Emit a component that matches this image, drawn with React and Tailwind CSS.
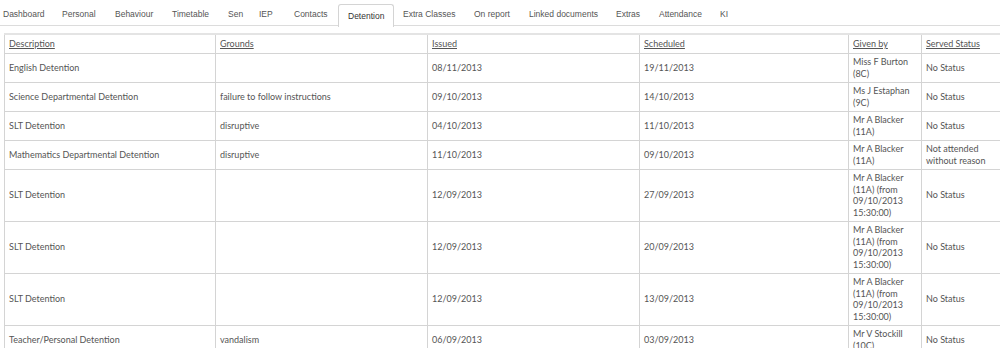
const TABS = [
  { label: "Dashboard", w: "w-[53px] pl-[3px]" },
  { label: "Personal", w: "w-[53px] pl-[9px]" },
  { label: "Behaviour", w: "w-[57px] pl-[9px]" },
  { label: "Timetable", w: "w-[56px] pl-[9px]" },
  { label: "Sen", w: "w-[31px] pl-[9px]" },
  { label: "IEP", w: "w-[35px] pl-[9px]" },
  { label: "Contacts", w: "w-[53px] pl-[9px]" },
  { label: "Detention", w: "w-[56px] pl-[9px]", active: true },
  { label: "Extra Classes", w: "w-[71px] pl-[9px]" },
  { label: "On report", w: "w-[55px] pl-[9px]" },
  { label: "Linked documents", w: "w-[87px] pl-[9px]" },
  { label: "Extras", w: "w-[43px] pl-[9px]" },
  { label: "Attendance", w: "w-[61px] pl-[9px]" },
  { label: "KI", w: "w-[40px] pl-[9px]" },
];

const BLACKER_FROM = ["Mr A Blacker", "(11A) (from", "09/10/2013", "15:30:00)"];

const ROWS = [
  { desc: "English Detention", grounds: "", issued: "08/11/2013", sched: "19/11/2013", by: ["Miss F Burton", "(8C)"], status: ["No Status"] },
  { desc: "Science Departmental Detention", grounds: "failure to follow instructions", issued: "09/10/2013", sched: "14/10/2013", by: ["Ms J Estaphan", "(9C)"], status: ["No Status"] },
  { desc: "SLT Detention", grounds: "disruptive", issued: "04/10/2013", sched: "11/10/2013", by: ["Mr A Blacker", "(11A)"], status: ["No Status"] },
  { desc: "Mathematics Departmental Detention", grounds: "disruptive", issued: "11/10/2013", sched: "09/10/2013", by: ["Mr A Blacker", "(11A)"], status: ["Not attended", "without reason"] },
  { desc: "SLT Detention", grounds: "", issued: "12/09/2013", sched: "27/09/2013", by: BLACKER_FROM, status: ["No Status"] },
  { desc: "SLT Detention", grounds: "", issued: "12/09/2013", sched: "20/09/2013", by: BLACKER_FROM, status: ["No Status"] },
  { desc: "SLT Detention", grounds: "", issued: "12/09/2013", sched: "13/09/2013", by: BLACKER_FROM, status: ["No Status"] },
  { desc: "Teacher/Personal Detention", grounds: "vandalism", issued: "06/09/2013", sched: "03/09/2013", by: ["Mr V Stockill", "(10C)"], status: ["No Status"] },
];

const CELL = "border border-[#d4d4d4] px-[4px] py-[2.5px] align-middle font-normal text-left";

function Lines({ lines }) {
  return lines.map((l, i) => (
    <span key={i} className="block whitespace-nowrap">{l}</span>
  ));
}

export default function App() {
  return (
    <div className="w-[1000px] h-[348px] overflow-hidden bg-white text-[#555]">
      <div className="flex h-[26px] border-b border-[#dcdcdc] font-['Liberation_Sans',Arial,sans-serif] text-[8.5px]">
        {TABS.map((t) => (
          <div
            key={t.label}
            className={`${t.w} shrink-0 flex items-center whitespace-nowrap ${
              t.active
                ? "mt-[4px] mb-[-1px] h-[23px] pt-[1px] border border-b-0 border-[#d4d4d4] rounded-t-[3px] bg-white text-[#333]"
                : "h-[26px] pt-[2px]"
            }`}
          >
            {t.label}
          </div>
        ))}
      </div>

      <div className="pt-[7px] pl-[4px]">
        <table className="table-fixed border-collapse w-[1010px] font-['Lato',sans-serif] text-[9px] leading-[11.5px]">
          <colgroup>
            <col className="w-[211px]" />
            <col className="w-[212px]" />
            <col className="w-[212px]" />
            <col className="w-[209px]" />
            <col className="w-[73px]" />
            <col className="w-[93px]" />
          </colgroup>
          <thead>
            <tr className="h-[19px]">
              {["Description", "Grounds", "Issued", "Scheduled", "Given by", "Served Status"].map((h) => (
                <th key={h} className={`${CELL} py-[2px] border-t-2 border-t-[#e4e4e4]`}>
                  <span className="underline underline-offset-1">{h}</span>
                </th>
              ))}
            </tr>
          </thead>
          <tbody>
            {ROWS.map((r, i) => (
              <tr key={i}>
                <td className={CELL}>{r.desc}</td>
                <td className={CELL}>{r.grounds}</td>
                <td className={CELL}>{r.issued}</td>
                <td className={CELL}>{r.sched}</td>
                <td className={CELL}><Lines lines={r.by} /></td>
                <td className={CELL}><Lines lines={r.status} /></td>
              </tr>
            ))}
          </tbody>
        </table>
      </div>
    </div>
  );
}
